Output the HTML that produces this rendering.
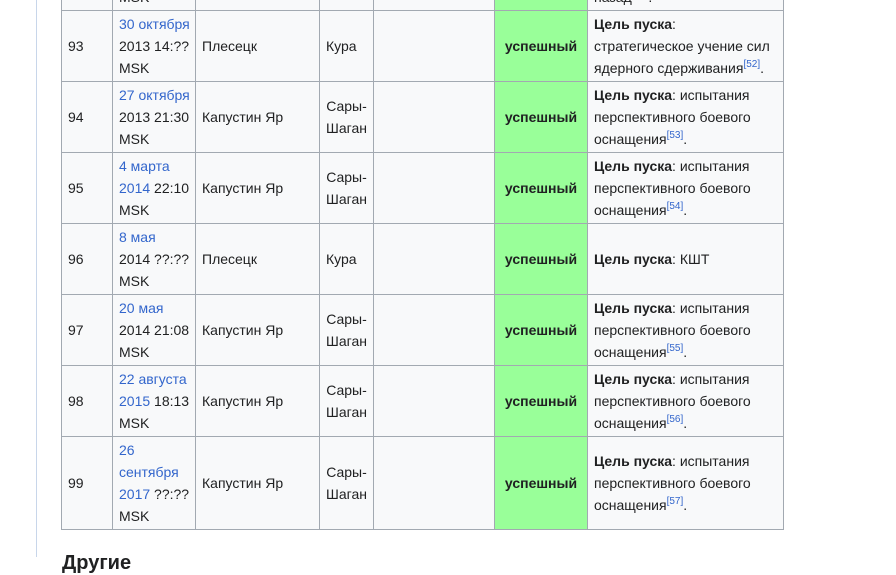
<!DOCTYPE html>
<html><head><meta charset="utf-8"><style>
body{margin:0;background:#fff;width:896px;height:557px;overflow:hidden;position:relative;font-family:"Liberation Sans",Arial,sans-serif;font-size:14px;color:#202122}
.bar{position:absolute;left:36px;top:0;width:1px;height:557px;background:#c8d6ea}
.wrap{position:absolute;left:61px;top:-61px}
table{border-collapse:collapse;background:#f8f9fa;table-layout:fixed;width:723px}
td{border:1px solid #a2a9b1;padding:2px 6px;line-height:22px;height:66px;vertical-align:middle;overflow:hidden;white-space:nowrap}
td.g{background:#99ff99;text-align:center;font-weight:bold;padding:2px 4px}
td.c{text-align:center}
a{color:#3366cc;text-decoration:none}
sup{font-size:10px;line-height:0;color:#3366cc;vertical-align:6px}
h3{position:absolute;left:62px;top:551px;margin:0;font-size:20px;font-weight:bold;line-height:24px}
</style></head><body>
<div class="bar"></div>
<div class="wrap"><table>
<colgroup><col style="width:51px"><col style="width:83px"><col style="width:124px"><col style="width:54px"><col style="width:121px"><col style="width:93px"><col style="width:196px"></colgroup>
<tr><td>92</td><td><a>1 сент.</a><br>2013<br>MSK</td><td>Плесецк</td><td>Кура</td><td></td><td class="g">успешный</td><td>Цель пуска:<br>испытание<br>назад<sup>[51]</sup>.</td></tr>
<tr><td>93</td><td><a>30 октября</a><br>2013 14:??<br>MSK</td><td>Плесецк</td><td>Кура</td><td></td><td class="g">успешный</td><td><b>Цель пуска</b>:<br>стратегическое учение сил<br>ядерного сдерживания<sup>[52]</sup>.</td></tr>
<tr><td>94</td><td><a>27 октября</a><br>2013 21:30<br>MSK</td><td>Капустин Яр</td><td class="c">Сары-<br>Шаган</td><td></td><td class="g">успешный</td><td><b>Цель пуска</b>: испытания<br>перспективного боевого<br>оснащения<sup>[53]</sup>.</td></tr>
<tr><td>95</td><td><a>4 марта</a><br><a>2014</a> 22:10<br>MSK</td><td>Капустин Яр</td><td class="c">Сары-<br>Шаган</td><td></td><td class="g">успешный</td><td><b>Цель пуска</b>: испытания<br>перспективного боевого<br>оснащения<sup>[54]</sup>.</td></tr>
<tr><td>96</td><td><a>8 мая</a><br>2014 ??:??<br>MSK</td><td>Плесецк</td><td>Кура</td><td></td><td class="g">успешный</td><td><b>Цель пуска</b>: КШТ</td></tr>
<tr><td>97</td><td><a>20 мая</a><br>2014 21:08<br>MSK</td><td>Капустин Яр</td><td class="c">Сары-<br>Шаган</td><td></td><td class="g">успешный</td><td><b>Цель пуска</b>: испытания<br>перспективного боевого<br>оснащения<sup>[55]</sup>.</td></tr>
<tr><td>98</td><td><a>22 августа</a><br><a>2015</a> 18:13<br>MSK</td><td>Капустин Яр</td><td class="c">Сары-<br>Шаган</td><td></td><td class="g">успешный</td><td><b>Цель пуска</b>: испытания<br>перспективного боевого<br>оснащения<sup>[56]</sup>.</td></tr>
<tr><td style="height:88px">99</td><td><a>26</a><br><a>сентября</a><br><a>2017</a> ??:??<br>MSK</td><td>Капустин Яр</td><td class="c">Сары-<br>Шаган</td><td></td><td class="g">успешный</td><td><b>Цель пуска</b>: испытания<br>перспективного боевого<br>оснащения<sup>[57]</sup>.</td></tr>
</table></div>
<h3>Другие</h3>
</body></html>
